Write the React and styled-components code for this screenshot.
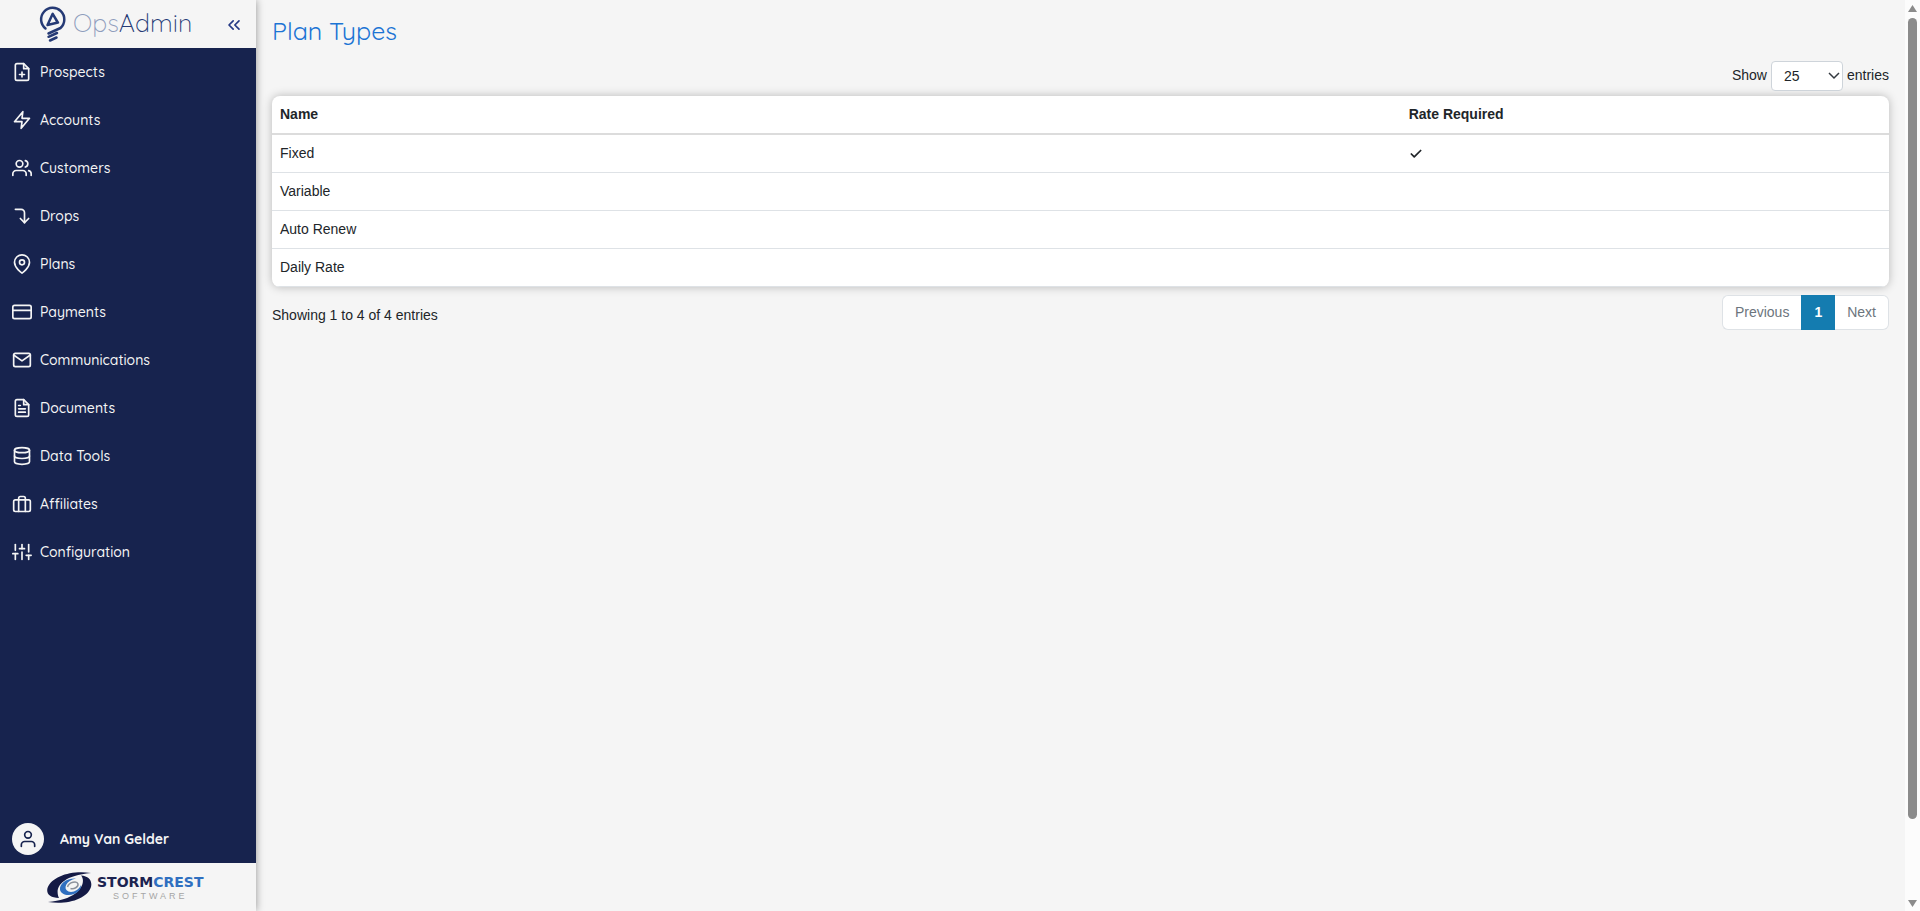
import styled, { createGlobalStyle } from 'styled-components'
import {
  FiBriefcase, FiCheck, FiChevronsLeft, FiCornerRightDown, FiCreditCard, FiDatabase,
  FiFilePlus, FiFileText, FiMail, FiMapPin, FiSliders, FiUser, FiUsers, FiZap
} from 'react-icons/fi'
import { useState } from 'react';

const GlobalStyle = createGlobalStyle`
  *{box-sizing:border-box}
  body{
    margin:0;
    background-color:#f5f5f5;
    color:#212529;
    font-family:"Liberation Sans", Arial, sans-serif;
    font-size:14px;
    line-height:21px;
  }
`;
const Layout = styled.div`
  display:flex;
  height:100vh;
`;
const Sidebar = styled.aside`
  display:flex;
  flex-direction:column;
  flex:0 0 256px;
  background-color:#17234e;
  box-shadow:0 0 8px rgba(0,0,0,0.4);
  font-family:Quicksand, Lato, sans-serif;
`;
const Brand = styled.div`
  display:flex;
  align-items:center;
  justify-content:space-between;
  height:48px;
  padding:0 12px 0 38px;
  background-color:#f5f5f5;
`;
const BrandLink = styled.a`
  display:flex;
  align-items:center;
  gap:5px;
  color:#253a75;
  font-size:25px;
  font-weight:300;
  line-height:32px;
  text-decoration:none;
  span{padding-bottom:2px}
`;
const Faded = styled.span`
  color:#8f9dbd;
`;
const CollapseButton = styled.button`
  display:flex;
  padding:2px 0 0;
  border:0;
  background:none;
  color:#253a85;
  font-size:20px;
`;
const Menu = styled.nav`
  flex:1;
`;
const MenuLink = styled.a`
  display:flex;
  align-items:center;
  gap:8px;
  height:48px;
  padding:0 12px;
  color:#f5f5f5;
  font-size:14px;
  font-weight:500;
  text-decoration:none;
  svg{font-size:20px}
`;
const UserLink = styled.a`
  display:flex;
  align-items:center;
  gap:16px;
  height:48px;
  padding:0 12px;
  color:#f5f5f5;
  font-size:14px;
  font-weight:700;
  text-decoration:none;
`;
const Avatar = styled.span`
  display:flex;
  align-items:center;
  justify-content:center;
  width:32px;
  height:32px;
  border-radius:50%;
  background-color:#f5f5f5;
  color:#17234e;
  font-size:20px;
`;
const Company = styled.div`
  display:flex;
  align-items:center;
  gap:5px;
  height:48px;
  padding:0 46px;
  background-color:#f5f5f5;
`;
const CompanyText = styled.div`
  display:flex;
  flex-direction:column;
  align-items:center;
`;
const CompanyName = styled.div`
  color:#1b2350;
  font-family:"DejaVu Sans", sans-serif;
  font-size:14px;
  font-weight:700;
  line-height:17px;
`;
const Crest = styled.span`
  color:#2f6fc0;
`;
const CompanyType = styled.div`
  color:#a5a5a5;
  font-family:"Liberation Sans", Arial, sans-serif;
  font-size:9px;
  line-height:10px;
  letter-spacing:3px;
`;
const Main = styled.main`
  flex:1;
  min-width:0;
  padding:15px 16px;
`;
const Title = styled.h1`
  margin:0 0 14px;
  color:#1c74d4;
  font-family:Quicksand, Lato, sans-serif;
  font-size:25px;
  font-weight:400;
  line-height:32px;
`;
const Length = styled.label`
  display:flex;
  align-items:center;
  justify-content:flex-end;
  gap:4px;
  margin-bottom:5px;
`;
const LengthText = styled.span`
  padding-bottom:2px;
`;
const Select = styled.select`
  appearance:none;
  width:72px;
  height:30px;
  padding:0 12px;
  border:1px solid #ced4da;
  border-radius:4px;
  background:#fff;
  color:#212529;
  font:inherit;
`;
const SelectBox = styled.span`
  position:relative;
  display:flex;
  svg{
    position:absolute;
    right:3px;
    top:10px;
    pointer-events:none;
  }
`;
const Table = styled.table`
  width:100%;
  border-spacing:0;
  border-radius:8px;
  background-color:#fff;
  box-shadow:0 0 10px rgba(0,0,0,0.25);
  overflow:hidden;
  table-layout:fixed;
`;
const Th = styled.th`
  width:${(props) => props.$width};
  padding:8px;
  border-bottom:2px solid #dcdcdc;
  text-align:left;
`;
const Td = styled.td`
  height:38px;
  padding:0 8px;
  border-bottom:1px solid #dee2e6;
  svg{
    display:block;
    stroke-width:3;
  }
`;
const TableFooter = styled.div`
  display:flex;
  justify-content:space-between;
  align-items:flex-start;
  padding-top:8px;
`;
const Info = styled.div`
  padding-top:10px;
`;
const Pagination = styled.div`
  display:flex;
`;
const PageButton = styled.button`
  height:35px;
  padding:0 12px;
  border:1px solid ${(props) => (props.$active ? '#147cb0' : '#dee2e6')};
  background-color:${(props) => (props.$active ? '#147cb0' : '#fff')};
  color:${(props) => (props.$active ? '#fff' : '#6c757d')};
  font:inherit;
  font-weight:${(props) => (props.$active ? 700 : 400)};
  &:first-child{
    border-right:0;
    border-radius:6px 0 0 6px;
  }
  &:last-child{
    border-left:0;
    border-radius:0 6px 6px 0;
  }
`;
const ScrollBar = styled.div`
  display:flex;
  flex-direction:column;
  align-items:center;
  flex:0 0 15px;
  padding:5px 0 4px;
  background-color:#fcfcfc;
  svg{display:block}
`;
const Track = styled.div`
  display:flex;
  flex:1;
  width:9px;
  padding:6px 0 2px;
`;
const Thumb = styled.div`
  width:9px;
  height:91%;
  border-radius:5px;
  background-color:#8b8b8b;
`;

const menuList = [
  { name: 'Prospects', Icon: FiFilePlus },
  { name: 'Accounts', Icon: FiZap },
  { name: 'Customers', Icon: FiUsers },
  { name: 'Drops', Icon: FiCornerRightDown },
  { name: 'Plans', Icon: FiMapPin },
  { name: 'Payments', Icon: FiCreditCard },
  { name: 'Communications', Icon: FiMail },
  { name: 'Documents', Icon: FiFileText },
  { name: 'Data Tools', Icon: FiDatabase },
  { name: 'Affiliates', Icon: FiBriefcase },
  { name: 'Configuration', Icon: FiSliders },
]

const planTypes = [
  { name: 'Fixed', rateRequired: true },
  { name: 'Variable', rateRequired: false },
  { name: 'Auto Renew', rateRequired: false },
  { name: 'Daily Rate', rateRequired: false },
]

function BulbLogo() {
  return (
    <svg width="30" height="38" viewBox="38 5 30 38" fill="none" stroke="#253a75" strokeWidth="2.500" strokeLinecap="round" strokeLinejoin="round">
      <path d="M45.500 28.500A11.600 11.600 0 1 1 60.500 28L48.500 33.500" />
      <path d="M57.500 22L52.700 13.800L47.500 25L58 22.500" />
      <path d="M48.500 36.800L57 33" />
      <path d="M50 40.500L56.500 37.500" />
    </svg>
  )
}

function SwirlLogo() {
  return (
    <svg width="46" height="32" viewBox="46 870 46 32">
      <path fill="#141a45" d="M91 872C72 869 52 875 47.500 887C46 893 50 897 59 897C55 889 58 875 91 872Z" />
      <path fill="#141a45" d="M48 901C68 904 87 898 91 886C92.500 880 89 875 81 874.500C87 881 80 899 48 901Z" />
      <path fill="#2f6fc0" d="M76 877.500C66 877 59.500 883 60 888.500C60.500 893.500 68 895.500 74 893C79 891 81.500 887 81 884C79 889 73 892 68.500 890.500C62.500 888 66 879.500 76 877.500Z" />
      <path fill="none" stroke="#8c929c" strokeWidth="1.500" d="M67.500 886C69 881 77 879.500 78 883C78.500 886 74 888.500 70.500 887.500" />
    </svg>
  )
}

function App() {
  const [length, setLength] = useState('25');

  return (
    <Layout>
      <GlobalStyle />
      <Sidebar>
        <Brand>
          <BrandLink href="#">
            <BulbLogo />
            <span><Faded>Ops</Faded>Admin</span>
          </BrandLink>
          <CollapseButton aria-label="Collapse menu"><FiChevronsLeft /></CollapseButton>
        </Brand>
        <Menu>
          {menuList.map(({ name, Icon }) => (
            <MenuLink href="#" key={name}><Icon />{name}</MenuLink>
          ))}
        </Menu>
        <UserLink href="#">
          <Avatar><FiUser /></Avatar>
          Amy Van Gelder
        </UserLink>
        <Company>
          <SwirlLogo />
          <CompanyText>
            <CompanyName>STORM<Crest>CREST</Crest></CompanyName>
            <CompanyType>SOFTWARE</CompanyType>
          </CompanyText>
        </Company>
      </Sidebar>
      <Main>
        <Title>Plan Types</Title>
        <Length>
          <LengthText>Show</LengthText>
          <SelectBox>
            <Select value={length} onChange={(e) => setLength(e.target.value)}>
              <option>10</option>
              <option>25</option>
              <option>50</option>
              <option>100</option>
            </Select>
            <svg width="12" height="10" viewBox="0 0 12 10" fill="none" stroke="#343a40" strokeWidth="1.500">
              <path d="M1 2l5 5l5-5" />
            </svg>
          </SelectBox>
          <LengthText>entries</LengthText>
        </Length>
        <Table>
          <thead>
            <tr>
              <Th $width="69.8%">Name</Th>
              <Th>Rate Required</Th>
            </tr>
          </thead>
          <tbody>
            {planTypes.map((item) => (
              <tr key={item.name}>
                <Td>{item.name}</Td>
                <Td>{item.rateRequired && <FiCheck aria-label="Yes" />}</Td>
              </tr>
            ))}
          </tbody>
        </Table>
        <TableFooter>
          <Info>Showing 1 to 4 of 4 entries</Info>
          <Pagination>
            <PageButton>Previous</PageButton>
            <PageButton $active>1</PageButton>
            <PageButton>Next</PageButton>
          </Pagination>
        </TableFooter>
      </Main>
      <ScrollBar>
        <svg width="9" height="7" viewBox="0 0 9 7" fill="#8b8b8b"><path d="M4.500 0L9 7H0Z" /></svg>
        <Track><Thumb /></Track>
        <svg width="9" height="7" viewBox="0 0 9 7" fill="#8b8b8b"><path d="M4.500 7L9 0H0Z" /></svg>
      </ScrollBar>
    </Layout>
  );
}

export default App;
